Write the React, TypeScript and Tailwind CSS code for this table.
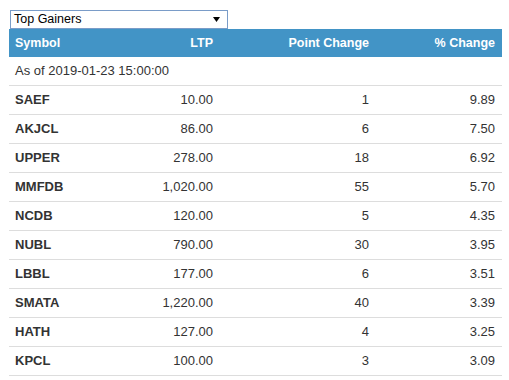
import React from "react";

const rows: [string, string, string, string][] = [
  ["SAEF", "10.00", "1", "9.89"],
  ["AKJCL", "86.00", "6", "7.50"],
  ["UPPER", "278.00", "18", "6.92"],
  ["MMFDB", "1,020.00", "55", "5.70"],
  ["NCDB", "120.00", "5", "4.35"],
  ["NUBL", "790.00", "30", "3.95"],
  ["LBBL", "177.00", "6", "3.51"],
  ["SMATA", "1,220.00", "40", "3.39"],
  ["HATH", "127.00", "4", "3.25"],
  ["KPCL", "100.00", "3", "3.09"],
];

export default function App() {
  return (
    <div
      className="w-[509px] h-[380px] bg-white pl-[9px] pt-[10px] text-[#333]"
      style={{ fontFamily: '"Liberation Sans", Arial, sans-serif' }}
    >
      <div className="ml-[1px] w-[218px] h-[19px] border border-[#7a9cc8] flex items-center justify-between pl-[3px] pr-[7px] text-[12.5px] text-black">
        <span>Top Gainers</span>
        <svg width="7" height="5" viewBox="0 0 7 5">
          <path d="M0 0 L7 0 L3.5 5 Z" fill="#000" />
        </svg>
      </div>
      <div className="w-[493px]">
        <div className="grid grid-cols-[120px_90px_156px_127px] h-[28px] items-center bg-[#4294c6] text-white font-bold text-[12.5px]">
          <div className="pl-[6px]">Symbol</div>
          <div className="text-right pr-[6px]">LTP</div>
          <div className="text-right pr-[6px]">Point Change</div>
          <div className="text-right pr-[7px]">% Change</div>
        </div>
        <div className="h-[29px] flex items-center pl-[6px] text-[13px] border-b border-[#ddd]">
          As of 2019-01-23 15:00:00
        </div>
        {rows.map((r) => (
          <div
            key={r[0]}
            className="grid grid-cols-[120px_90px_156px_127px] h-[29px] items-center text-[13px] border-b border-[#ddd]"
          >
            <div className="pl-[6px] font-bold">{r[0]}</div>
            <div className="text-right pr-[6px]">{r[1]}</div>
            <div className="text-right pr-[6px]">{r[2]}</div>
            <div className="text-right pr-[7px]">{r[3]}</div>
          </div>
        ))}
      </div>
    </div>
  );
}
